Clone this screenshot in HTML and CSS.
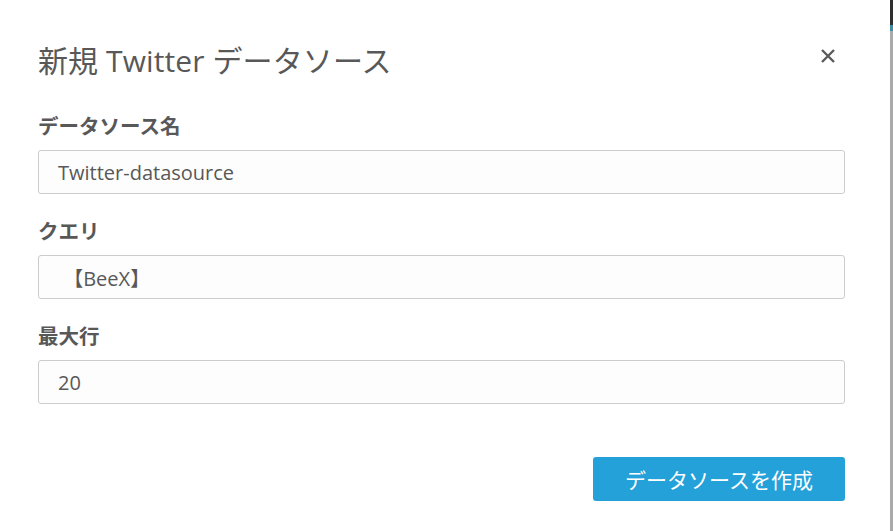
FILE: index.html
```html
<!DOCTYPE html>
<html lang="ja">
<head>
<meta charset="utf-8">
<title>新規 Twitter データソース</title>
<link rel="stylesheet" href="styles.css">
</head>
<body>
<div class="screen">
  <div class="modal">
    <div class="header">
      <h1 class="title">新規 Twitter データソース</h1>
      <button class="close" aria-label="閉じる">
        <svg width="16" height="16" viewBox="0 0 16 16"><path d="M2 2 L14 14 M14 2 L2 14" stroke="#5a5a5a" stroke-width="2.4" stroke-linecap="butt" fill="none"/></svg>
      </button>
    </div>
    <div class="field">
      <label class="label">データソース名</label>
      <div class="input">Twitter-datasource</div>
    </div>
    <div class="field">
      <label class="label">クエリ</label>
      <div class="input">&nbsp;【BeeX】</div>
    </div>
    <div class="field">
      <label class="label">最大行</label>
      <div class="input">20</div>
    </div>
    <div class="footer">
      <button class="primary">データソースを作成</button>
    </div>
  </div>
  <div class="edge">
    <div class="edge-dark"></div>
    <div class="edge-teal"></div>
    <div class="edge-gray"></div>
  </div>
</div>
</body>
</html>
```
FILE: styles.css
```css
html, body {
  margin: 0;
  padding: 0;
  background: #ffffff;
}
body {
  font-family: "Open Sans", "Noto Sans CJK JP", sans-serif;
  color: #585858;
}
.screen {
  display: flex;
  width: 893px;
  height: 531px;
  overflow: hidden;
}
.modal {
  flex: 1;
  background: #ffffff;
  padding: 43px 45px 0 38px;
  box-sizing: border-box;
}
.header {
  display: flex;
  align-items: center;
  justify-content: space-between;
  height: 36px;
  margin-bottom: 35px;
}
.title {
  margin: 0;
  font-size: 30px;
  font-weight: 400;
  line-height: 36px;
  color: #585858;
  letter-spacing: 0.1px;
}
.close {
  border: 0;
  background: transparent;
  padding: 0;
  width: 16px;
  height: 16px;
  margin-right: 9px;
  margin-top: -10px;
  display: flex;
}
.field {
  display: flex;
  flex-direction: column;
}
.field + .field {
  margin-top: 25px;
}
.label {
  font-size: 20.5px;
  font-weight: 700;
  line-height: 24px;
  margin-bottom: 12px;
  color: #585858;
}
.input {
  height: 44px;
  box-sizing: border-box;
  border: 1px solid #cccccc;
  border-radius: 3px;
  background: #fdfdfd;
  padding: 0 19px;
  display: flex;
  align-items: center;
  font-size: 20px;
  color: #585858;
}
.footer {
  display: flex;
  justify-content: flex-end;
  margin-top: 53px;
}
.primary {
  width: 252px;
  height: 44px;
  border: 0;
  border-radius: 3px;
  background: #24a1d9;
  color: #ffffff;
  font-family: "Open Sans", "Noto Sans CJK JP", sans-serif;
  font-size: 21px;
  padding: 0;
}
.edge {
  width: 3px;
  display: flex;
  flex-direction: column;
}
.edge-dark { height: 25px; background: #2f2f2f; }
.edge-teal { height: 6px; background: #3c8fa0; }
.edge-gray { flex: 1; background: #aaaaaa; }
```
